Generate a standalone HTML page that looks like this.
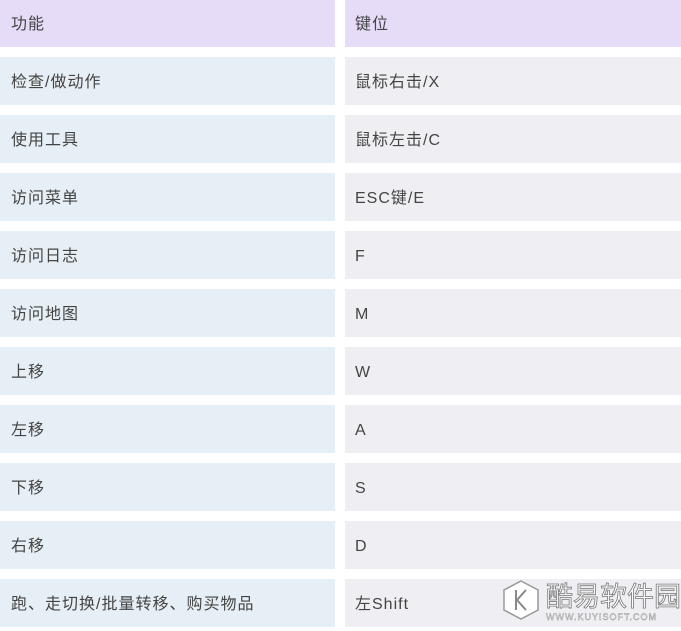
<!DOCTYPE html>
<html><head><meta charset="utf-8"><style>
*{margin:0;padding:0;box-sizing:border-box}
body{width:681px;height:622px;overflow:hidden;background:#fff;position:relative;font-family:"Liberation Sans","Noto Sans CJK SC",sans-serif;font-size:16px;letter-spacing:1px;color:#444}
.c{position:absolute;height:48px;line-height:52px;padding-left:11px}
.l{left:0;width:335px;background:#e6eff5}
.r{left:345px;width:336px;background:#efeff3;padding-left:10px}
.h.l,.h.r{background:#e6dcf7}
.wm{position:absolute;left:500px;top:578px;width:181px;height:44px}
</style></head><body>
<div class="c l h" style="top:-1px">功能</div><div class="c r h" style="top:-1px">键位</div>
<div class="c l" style="top:57px">检查/做动作</div><div class="c r" style="top:57px">鼠标右击/X</div>
<div class="c l" style="top:115px">使用工具</div><div class="c r" style="top:115px">鼠标左击/C</div>
<div class="c l" style="top:173px">访问菜单</div><div class="c r" style="top:173px">ESC键/E</div>
<div class="c l" style="top:231px">访问日志</div><div class="c r" style="top:231px">F</div>
<div class="c l" style="top:289px">访问地图</div><div class="c r" style="top:289px">M</div>
<div class="c l" style="top:347px">上移</div><div class="c r" style="top:347px">W</div>
<div class="c l" style="top:405px">左移</div><div class="c r" style="top:405px">A</div>
<div class="c l" style="top:463px">下移</div><div class="c r" style="top:463px">S</div>
<div class="c l" style="top:521px">右移</div><div class="c r" style="top:521px">D</div>
<div class="c l" style="top:579px">跑、走切换/批量转移、购买物品</div><div class="c r" style="top:579px">左Shift</div>
<svg class="wm" viewBox="0 0 181 44" width="181" height="44">
<polygon points="21,3 38,12 38,32 21,41 4,32 4,12" fill="#fff" stroke="#999" stroke-width="1.5"/>
<path d="M16,12V32M26,12L17,22L26,32" fill="none" stroke="#888" stroke-width="2"/>
<text x="46" y="28" font-size="27" fill="#fff" stroke="#777" stroke-width="0.8" font-family="Noto Sans CJK SC,sans-serif" letter-spacing="0">酷易软件园</text>
<text x="46" y="42" font-size="9" fill="#fff" stroke="#888" stroke-width="0.4" letter-spacing="1">WWW.KUYISOFT.COM</text>
</svg>
</body></html>
